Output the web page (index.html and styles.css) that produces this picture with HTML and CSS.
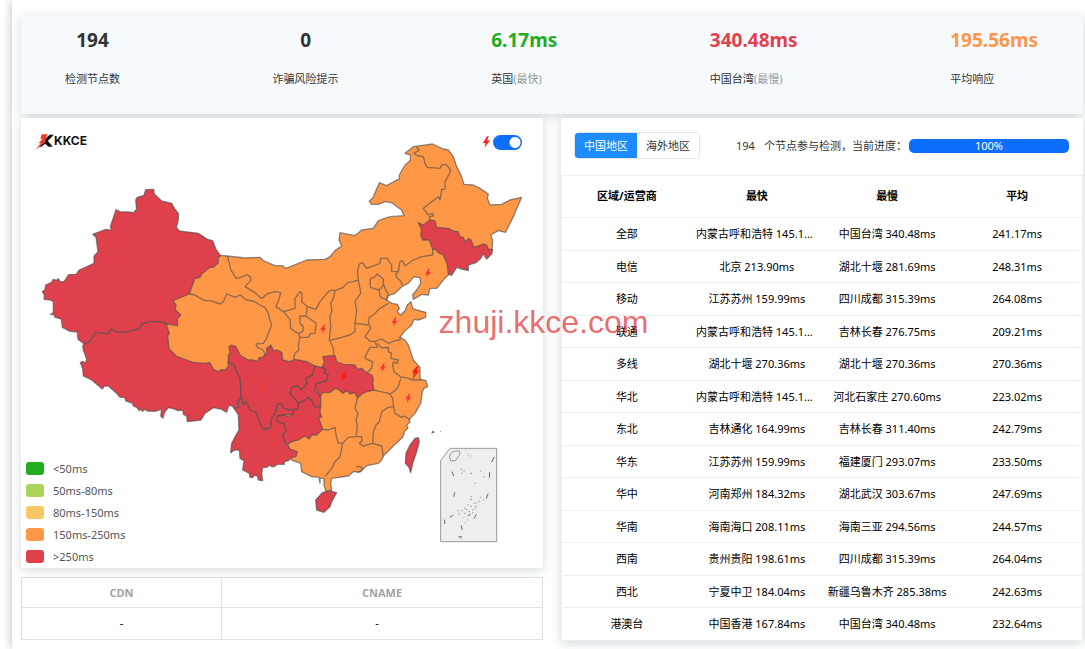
FILE: index.html
```html
<!DOCTYPE html>
<html lang="zh-CN">
<head>
<meta charset="utf-8">
<meta name="viewport" content="width=device-width, initial-scale=1">
<title>KKCE</title>
<link rel="stylesheet" href="styles.css">
</head>
<body>
<main class="page">
  <section class="stats">
    <div class="stat stat-center"><strong>194</strong><span>检测节点数</span></div>
    <div class="stat stat-center"><strong>0</strong><span>诈骗风险提示</span></div>
    <div class="stat"><strong class="fast">6.17ms</strong><span>英国<em>(最快)</em></span></div>
    <div class="stat"><strong class="slow">340.48ms</strong><span>中国台湾<em>(最慢)</em></span></div>
    <div class="stat"><strong class="mean">195.56ms</strong><span>平均响应</span></div>
  </section>

  <div class="columns">
    <div class="left">
      <section class="card map-card">
        <svg class="map" viewBox="63 354 1566 1350" role="img" aria-label="中国地图">
          <defs>
            <path id="bolt" d="M2 -17 L-12 4 L-3 3 L-6 17 L11 -5 L2 -4 L7 -17 Z"/>
          </defs>
          <g class="land">
            <path class="orange" d="M661 766 682 768 735 774 780 772 790 782 825 797 848 797 858 805 920 780 975 778 990 770 1005 752 1025 738 1017 720 1020 698 1065 707 1085 690 1120 685 1135 662 1170 650 1212 647 1205 630 1175 608 1155 605 1135 613 1115 613 1108 603 1118 595 1138 548 1160 557 1190 540 1198 538 1198 525 1215 495 1230 482 1232 465 1215 460 1240 440 1298 432 1330 447 1345 450 1360 470 1370 500 1385 530 1392 553 1420 555 1440 565 1465 582 1462 595 1470 615 1505 613 1530 600 1565 592 1552 622 1540 650 1525 680 1517 697 1495 692 1472 705 1478 720 1476 748 1400 760 1345 825 1332 838 1310 865 1290 865 1285 885 1265 883 1240 898 1238 885 1250 870 1262 850 1260 833 1242 830 1225 850 1205 860 1185 880 1165 887 1160 900 1175 910 1192 913 1198 925 1192 935 1202 945 1215 932 1222 915 1233 905 1238 925 1250 930 1277 937 1277 952 1255 960 1242 958 1235 975 1215 992 1200 1012 1215 1020 1225 1035 1240 1080 1260 1102 1260 1137 1278 1142 1283 1160 1272 1165 1267 1175 1262 1210 1245 1240 1228 1258 1230 1266 1220 1276 1224 1284 1214 1294 1208 1312 1180 1338 1150 1368 1145 1380 1135 1390 1100 1397 1080 1415 1060 1415 1045 1428 995 1435 992 1450 995 1470 978 1475 972 1455 972 1435 960 1435 960 1450 957 1432 935 1430 905 1415 902 1390 875 1380 863 1332 800 1250 700 1150 600 1110 500 1080 490 1000 490 930 560 850 600 800Z"/>
            <path class="line" d="M682 768 688 790 692 808 708 835 722 832 742 824 752 832 752 842 735 860 765 878 780 892 788 894 800 882 825 875 842 878 838 895 828 920 850 935 870 958 872 985 885 995 895 1000 900 1012 895 1035 897 1050 885 1060 880 1078M850 935 885 925 885 895 900 875 906 880 905 905 922 920 918 948 900 948 900 970 910 980 908 995 895 1000M918 948 948 970 945 1000 932 1000 925 1012 900 1012M922 920 948 928 960 905 985 875 996 870 1005 872 1030 862 1042 848 1060 845 1075 840M1005 872 1000 895 992 910 996 930 990 950 992 980 988 1020 1000 1045 1002 1068M568 882 585 885 596 892 615 902 632 902 660 912 670 905 680 882 705 892 720 885 740 900 760 903 780 915 795 922 805 940 808 955 815 975 805 1000 800 1015 790 1030 768 1032 772 1042 790 1050 795 1065M1075 840 1080 865 1082 880 1065 905 1070 930 1065 970 1065 995 1050 1005 1025 1012 988 1022M1065 970 1105 975M1075 840 1072 815 1078 792 1088 788 1100 805 1140 790 1142 775 1162 775 1175 795 1175 815 1195 815 1187 825 1192 835 1202 843 1207 855M1195 815 1200 785 1208 782 1215 798 1240 780 1265 770 1298 765 1298 748M1110 850 1112 835 1122 833 1132 822 1150 838 1150 855 1138 870 1112 863ZM1138 870 1140 890 1158 900 1165 885 1155 865 1150 850M1165 910 1140 925 1120 945 1108 952 1105 965 1112 985 1095 1010 1110 1023 1125 1025 1145 1017 1165 1030 1185 1022 1200 1020 1200 1012M1125 1025 1132 1042 1110 1042 1095 1070 1100 1078 1118 1085 1115 1105 1100 1120M1132 1030 1145 1044 1165 1042 1165 1055 1175 1060 1172 1075 1195 1080 1192 1090 1180 1086 1178 1095 1182 1115 1195 1125 1205 1132 1215 1132 1240 1140 1242 1110 1255 1100M1240 1140 1262 1140M1202 1135 1195 1160 1185 1172 1170 1182 1158 1178 1142 1175 1120 1170M1170 1182 1178 1195 1180 1215 1185 1240 1205 1252 1214 1248 1230 1260M1180 1220 1165 1222 1145 1235 1138 1265 1128 1275 1120 1295 1118 1330M1072 1195 1065 1225 1074 1240 1068 1260 1072 1280 1068 1310M968 1288 985 1290 1005 1282 1008 1305 1015 1330 1030 1328 1045 1312 1068 1310 1085 1310 1086 1322 1078 1330 1090 1338 1118 1330 1145 1338 1150 1370M1028 1330 1020 1370 1005 1385 995 1405 975 1430M1068 1400 1082 1400 1088 1407 1082 1415 1070 1418M1248 440 1258 450 1242 460 1254 468 1270 470 1275 490 1282 502 1320 505 1325 495 1338 493 1352 510 1348 522 1335 545 1335 568 1325 568 1320 600 1315 590 1270 625 1285 645 1298 640 1300 648 1288 650 1290 662"/>
            <path class="red" d="M437 569 461 568 463 582 485 603 515 610 523 625 535 640 535 660 529 682 538 693 595 700 622 718 638 722 648 748 661 766 654 775 655 788 640 802 630 802 605 822 600 832 584 836 568 882 518 902 528 915 525 928 542 945 532 958 533 977 502 972 480 965 450 965 425 972 418 987 400 990 380 997 350 997 335 987 322 1002 288 997 273 1018 270 1025 252 1032 234 1018 232 996 210 994 187 982 184 957 165 952 162 944 152 943 160 938 160 905 152 900 132 898 133 886 127 874 135 870 137 855 155 847 160 838 170 841 175 836 181 846 193 844 206 824 228 823 238 810 282 790 282 768 294 755 288 712 278 703 318 688 335 691 331 680 348 629 360 635 385 636 400 638 410 628 407 600 412 592 432 586Z"/>
            <path class="red" d="M252 1032 270 1025 273 1018 288 997 322 1002 335 987 350 997 380 997 400 990 418 987 425 972 450 965 480 965 502 972 500 978 508 1000 503 1008 507 1045 528 1068 560 1080 580 1087 610 1090 630 1088 640 1108 657 1116 662 1109 675 1110 685 1100 684 1085 702 1095 712 1120 720 1132 724 1190 715 1205 716 1222 705 1225 690 1215 684 1222 680 1237 665 1228 640 1223 615 1240 603 1260 562 1265 560 1248 551 1244 548 1230 535 1232 520 1226 505 1223 493 1238 489 1254 482 1248 485 1228 465 1234 442 1233 435 1228 428 1234 423 1227 418 1232 410 1222 400 1218 398 1210 378 1203 373 1192 360 1192 348 1178 325 1158 313 1158 307 1167 275 1140 250 1128 248 1105 241 1088 248 1084 256 1090 260 1078 250 1050 248 1038Z"/>
            <path class="red" d="M685 1085 685 1065 690 1060 687 1040 695 1035 708 1040 720 1065 745 1080 760 1080 772 1085 778 1072 788 1072 800 1060 800 1045 813 1035 820 1052 832 1050 846 1058 848 1080 870 1085 885 1078 920 1085 945 1098 938 1125 918 1135 922 1150 905 1170 893 1158 878 1160 870 1180 888 1200 895 1210 893 1228 882 1228 872 1230 850 1225 843 1210 832 1213 828 1235 815 1255 812 1282 790 1290 778 1265 768 1238 750 1230 738 1205 730 1215 724 1190 720 1132 712 1120 702 1095Z"/>
            <path class="red" d="M716 1222 715 1205 724 1190 730 1215 738 1205 750 1230 768 1238 778 1265 790 1290 812 1282 815 1255 828 1235 832 1213 843 1210 850 1225 872 1230 882 1228 880 1242 850 1245 832 1248 832 1265 852 1270 860 1292 848 1305 855 1328 872 1348 892 1355 888 1370 875 1372 865 1382 853 1385 853 1393 832 1393 822 1400 815 1400 810 1395 800 1402 788 1402 785 1420 788 1442 775 1440 772 1428 762 1426 758 1433 750 1432 748 1420 728 1410 732 1382 720 1375 718 1350 704 1350 692 1358 695 1330 708 1305 717 1290 715 1245 702 1225Z"/>
            <path class="red" d="M832 1248 850 1245 865 1250 880 1242 882 1228 893 1228 895 1210 915 1200 925 1192 935 1200 945 1220 962 1220 960 1235 965 1252 955 1252 962 1270 968 1288 950 1305 935 1305 928 1317 915 1308 895 1320 875 1325 865 1332 855 1328 848 1305 860 1292 852 1270 832 1265Z"/>
            <path class="red" d="M945 1098 965 1102 978 1108 985 1125 980 1142 948 1152 945 1172 962 1190 962 1220 945 1220 935 1200 925 1192 915 1200 895 1210 888 1200 870 1180 878 1160 893 1158 905 1170 922 1150 918 1135 938 1125Z"/>
            <path class="red" d="M968 1070 985 1068 1005 1067 1010 1085 1030 1093 1065 1095 1072 1108 1085 1105 1100 1118 1115 1125 1120 1135 1118 1150 1122 1170 1100 1175 1085 1182 1072 1195 1065 1178 1050 1182 1042 1172 1028 1180 1018 1170 1005 1165 992 1177 968 1178 960 1190 945 1160 948 1152 980 1142 985 1125 972 1118 978 1108 967 1102 973 1085Z"/>
            <path class="red" d="M1255 668 1270 675 1282 665 1292 660 1305 663 1310 682 1345 685 1360 693 1375 695 1380 710 1390 712 1395 725 1405 716 1412 718 1422 742 1435 738 1448 732 1460 735 1465 748 1478 748 1475 762 1460 777 1450 762 1440 778 1428 788 1405 795 1405 812 1385 807 1370 802 1355 826 1345 822 1342 795 1330 765 1318 760 1305 748 1298 748 1288 720 1268 720 1262 705 1265 690Z"/>
            <path class="red" d="M968 1477 990 1473 1010 1478 995 1505 990 1520 972 1537 950 1530 947 1500Z"/>
            <path class="red" d="M1245 1315 1255 1313 1258 1325 1250 1355 1238 1390 1235 1405 1232 1418 1227 1402 1216 1390 1218 1360 1230 1335Z"/>
          </g>
          <g class="sea">
            <path class="frame" d="M1322 1381 1350 1345 1490 1345 1490 1625 1322 1625Z"/>
            <path class="isle" d="M1355 1357 1367 1353 1378 1353 1380 1363 1365 1383 1352 1382 1348 1368Z"/>
            <path class="dash" d="M1475 1386 1483 1371M1356 1415 1361 1428M1469 1417 1468 1433M1364 1477 1361 1490M1464 1481 1459 1496M1429 1543 1422 1556M1334 1559 1334 1572M1383 1576 1387 1590M1375 1611 1386 1610M1403 1548 1412 1542M1350 1552 1360 1545M1294 1299 1303 1297M1296 1296 1302 1293"/>
            <path class="dots" d="M1382 1408h4M1390 1413h4M1384 1420h4M1410 1420h6M1402 1364h4M1411 1368h3M1440 1413h4M1451 1430h4M1424 1450h4M1412 1490h4M1409 1498h6M1439 1492h4M1435 1504h6M1449 1500h4M1420 1510h4M1402 1514h4M1410 1519h5M1392 1525h5M1398 1529h4M1416 1530h4M1425 1519h5M1384 1532h4M1375 1542h5M1392 1540h4M1405 1535h5M1416 1538h4M1372 1533h4M1390 1552h3M1402 1560h3M1395 1568h3M1384 1580h3M1320 1294h3M1423 1525h4M1427 1509h4M1379 1614h5"/>
          </g>
          <g class="bolts">
            <use href="#bolt" transform="translate(1284 820) scale(.8)"/>
            <use href="#bolt" transform="translate(1184 966) scale(.8)"/>
            <use href="#bolt" transform="translate(970 987) scale(.8)"/>
            <use class="hot" href="#bolt" transform="translate(1032 1130)"/>
            <use href="#bolt" transform="translate(1149 1103) scale(.8)"/>
            <use class="hot" href="#bolt" transform="translate(1248 1116)"/>
            <use href="#bolt" transform="translate(1225 1195) scale(.8)"/>
            <use href="#bolt" transform="translate(790 1161) scale(.8)"/>
          </g>
        </svg>
        <header class="map-head">
          <a class="logo" href="#">
            <svg viewBox="0 0 56 48" aria-hidden="true">
              <path fill="#111" d="M30 13 44 2H56L38 21 53 38H40L30 29 19 38H10L28 21Z"/>
              <path fill="#ee3a24" d="M20 1H38L32 9H38L27 22H34L0 48 17 28H10L22 14H15Z"/>
            </svg>
            <span>KKCE</span>
          </a>
          <label class="switch">
            <svg viewBox="-13 -18 26 36" aria-hidden="true"><use href="#bolt"/></svg>
            <input type="checkbox" role="switch" aria-label="节点闪烁" checked>
          </label>
        </header>
        <ul class="legend">
          <li><i class="c1"></i>&lt;50ms</li>
          <li><i class="c2"></i>50ms-80ms</li>
          <li><i class="c3"></i>80ms-150ms</li>
          <li><i class="c4"></i>150ms-250ms</li>
          <li><i class="c5"></i>&gt;250ms</li>
        </ul>
      </section>
      <table class="cdn">
        <thead><tr><th class="cdn-name">CDN</th><th>CNAME</th></tr></thead>
        <tbody><tr><td>-</td><td class="cname">-</td></tr></tbody>
      </table>
    </div>

    <section class="card result">
      <div class="toolbar">
        <div class="tabs">
          <button type="button" class="active">中国地区</button>
          <button type="button">海外地区</button>
        </div>
        <p class="note"><span>194</span><span>个节点参与检测，当前进度：</span></p>
        <div class="progress" role="progressbar" aria-label="当前进度" aria-valuenow="100">100%</div>
      </div>
      <table class="regions">
        <thead><tr><th>区域/运营商</th><th>最快</th><th>最慢</th><th>平均</th></tr></thead>
        <tbody>
          <tr><td>全部</td><td class="long">内蒙古呼和浩特 145.1...</td><td>中国台湾 340.48ms</td><td>241.17ms</td></tr>
          <tr><td>电信</td><td>北京 213.90ms</td><td>湖北十堰 281.69ms</td><td>248.31ms</td></tr>
          <tr><td>移动</td><td>江苏苏州 159.99ms</td><td>四川成都 315.39ms</td><td>264.08ms</td></tr>
          <tr><td>联通</td><td class="long">内蒙古呼和浩特 145.1...</td><td>吉林长春 276.75ms</td><td>209.21ms</td></tr>
          <tr><td>多线</td><td>湖北十堰 270.36ms</td><td>湖北十堰 270.36ms</td><td>270.36ms</td></tr>
          <tr><td>华北</td><td class="long">内蒙古呼和浩特 145.1...</td><td>河北石家庄 270.60ms</td><td>223.02ms</td></tr>
          <tr><td>东北</td><td>吉林通化 164.99ms</td><td>吉林长春 311.40ms</td><td>242.79ms</td></tr>
          <tr><td>华东</td><td>江苏苏州 159.99ms</td><td>福建厦门 293.07ms</td><td>233.50ms</td></tr>
          <tr><td>华中</td><td>河南郑州 184.32ms</td><td>湖北武汉 303.67ms</td><td>247.69ms</td></tr>
          <tr><td>华南</td><td>海南海口 208.11ms</td><td>海南三亚 294.56ms</td><td>244.57ms</td></tr>
          <tr><td>西南</td><td>贵州贵阳 198.61ms</td><td>四川成都 315.39ms</td><td>264.04ms</td></tr>
          <tr><td>西北</td><td>宁夏中卫 184.04ms</td><td>新疆乌鲁木齐 285.38ms</td><td>242.63ms</td></tr>
          <tr><td>港澳台</td><td>中国香港 167.84ms</td><td>中国台湾 340.48ms</td><td>232.64ms</td></tr>
        </tbody>
      </table>
    </section>
  </div>
  <div class="watermark">zhuji.kkce.com</div>
</main>
</body>
</html>
```
FILE: styles.css
```css
* { box-sizing: border-box; }

body {
  margin: 0;
  overflow-x: hidden;
  background: #fff;
  color: #000;
  font: 11px/16px "Noto Sans", "Noto Sans CJK SC", sans-serif;
}

.page {
  position: relative;
  min-height: 100vh;
  margin-left: 12px;
  padding: 16px 2px 8px 9px;
  background: #fff;
  box-shadow: 0 0 10px rgba(0, 0, 0, .25);
}

.stats,
.card { box-shadow: 0 2px 10px rgba(60, 80, 90, .22); }

.stats {
  display: flex;
  justify-content: space-between;
  min-height: 98px;
  padding: 11px 45px 12px 44px;
  background: #f6fafd;
  color: #333;
}

.stat {
  display: flex;
  flex-direction: column;
  gap: 18px;
}
.stat-center { align-items: center; }
.stat strong { font-size: 19px; line-height: 26px; }
.stat em { color: #999; font-style: normal; }
.stat .fast { color: #23ac20; }
.stat .slow { color: #e2404d; }
.stat .mean { color: #ff9648; }

.columns {
  display: grid;
  grid-template-columns: 1fr 1fr;
  gap: 18px;
  align-items: start;
  padding-top: 4px;
}

.card { position: relative; background: #fff; }

.map { display: block; width: 100%; }
.land path,
.sea path { stroke-linejoin: round; }
.land path { stroke: rgba(85, 80, 80, .65); stroke-width: 4; }
.land .orange { fill: #ff9846; }
.land .red { fill: #e0404c; }
.land .line { fill: none; }
.sea path { fill: none; stroke: #999; stroke-width: 3; }
.sea .frame { fill: #eee; }
.sea .dash { stroke: #666; }
.sea .dots { stroke: #999; }
.bolts { fill: #f7372f; }
.bolts .hot { fill: #ff1a1a; }

.map-head {
  position: absolute;
  inset: 0 0 auto;
  display: flex;
  justify-content: space-between;
  align-items: center;
  height: 44px;
  padding: 4px 21px 0 14px;
}

.logo {
  display: flex;
  color: #111;
  text-decoration: none;
  font: 700 12px/14px Inter, sans-serif;
}
.logo svg { width: 19px; height: 16px; }

.switch { display: flex; align-items: center; gap: 2px; }
.switch svg { width: 9px; height: 12px; fill: #ff1f2d; }
.switch input {
  appearance: none;
  width: 29px;
  height: 15px;
  margin: 0;
  border-radius: 8px;
  background: radial-gradient(circle at 22px 50%, #fff 5px, #0d6efd 6px);
}

.legend {
  position: absolute;
  left: 5px;
  bottom: 5px;
  display: grid;
  gap: 9px;
  margin: 0;
  padding: 0;
  color: #555;
  list-style: none;
}
.legend li { display: flex; align-items: center; gap: 9px; line-height: 13px; }
.legend i { width: 18px; height: 13px; border-radius: 3px; }
.c1 { background: #23ac20; }
.c2 { background: #acd45a; }
.c3 { background: #f9c866; }
.c4 { background: #ff9846; }
.c5 { background: #e0404c; }

table { width: 100%; border-collapse: collapse; table-layout: fixed; text-align: center; }
th, td { padding: 0; }

.cdn { margin-top: 9px; }
.cdn th, .cdn td { border: 1px solid #dfe1e8; }
.cdn th { height: 30px; color: #a3a3a3; }
.cdn td { height: 32px; padding-bottom: 2px; }
.cdn .cname { padding-right: 10px; }
.cdn-name { width: 200px; }

.toolbar {
  display: flex;
  align-items: center;
  height: 57px;
  padding: 0 14px 2px 13px;
}
.tabs {
  display: flex;
  overflow: hidden;
  border: 1px solid #e4e4e8;
  border-radius: 4px;
}
.tabs button {
  height: 25px;
  padding: 0 9px;
  border: 0;
  background: #fff;
  color: #333;
  font: inherit;
}
.tabs .active { background: #1c8cff; color: #fff; }
.note {
  display: flex;
  gap: 9px;
  margin: 0 2px 0 36px;
  color: #333;
  white-space: nowrap;
}
.progress {
  flex: 1;
  height: 14px;
  border-radius: 5px;
  background: #0d6efd;
  color: #fff;
  line-height: 13px;
  text-align: center;
}

.regions { border: 1px solid #ebeef2; }
.regions th { height: 42px; padding-bottom: 2px; }
.regions td { height: 32px; border-top: 1px solid #ebeef2; white-space: nowrap; }
.regions tr:nth-child(odd) td { height: 33px; }
.regions .long { padding-right: 5px; }

.watermark {
  position: absolute;
  top: 303px;
  left: 0;
  right: 10px;
  color: rgba(222, 46, 46, .7);
  font: 32px/38px "Liberation Sans", sans-serif;
  text-align: center;
  pointer-events: none;
}
```
